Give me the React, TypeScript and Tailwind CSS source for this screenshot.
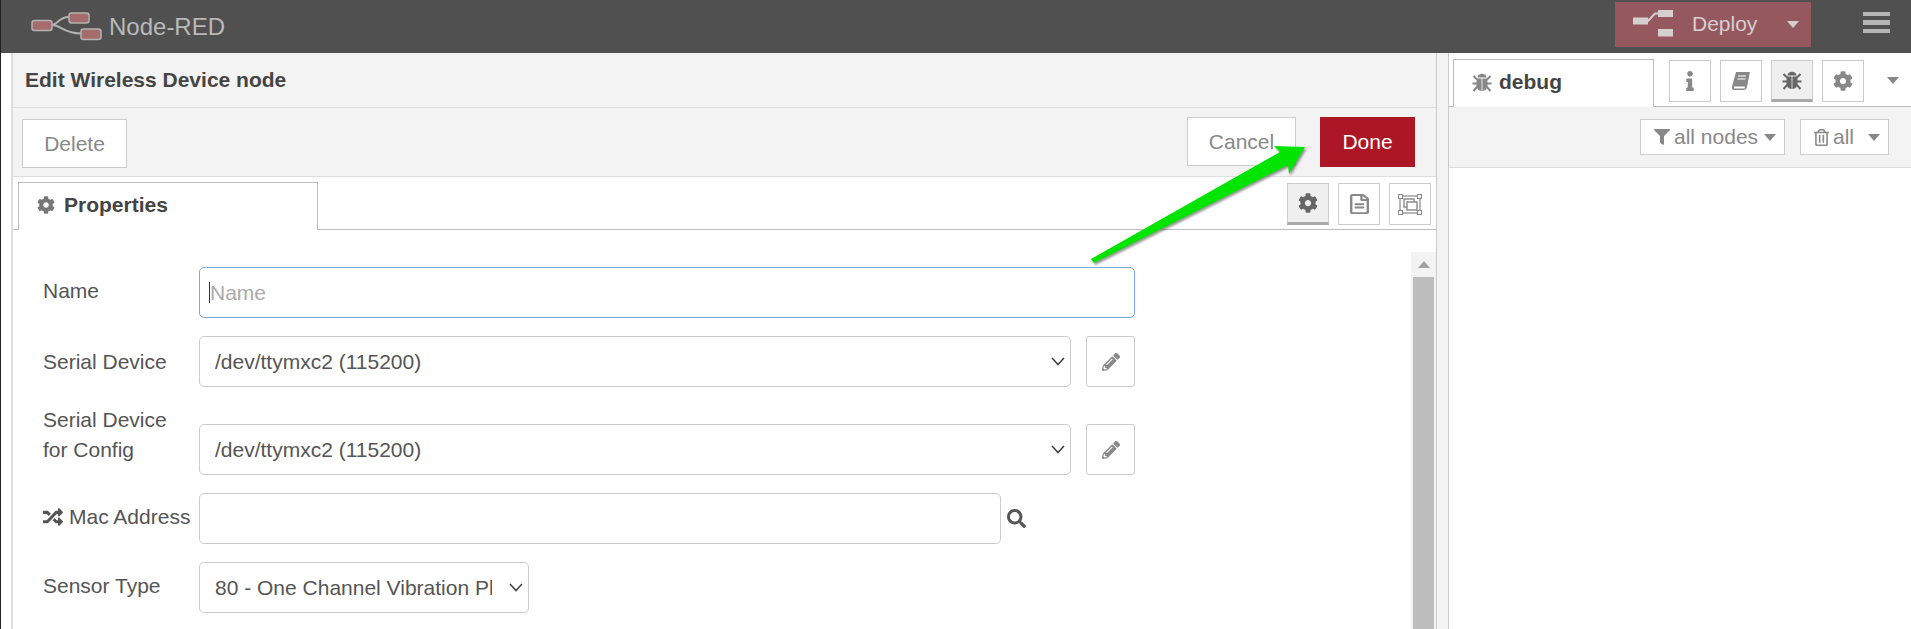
import { FaCog, FaFilter, FaInfo, FaPencilAlt, FaRandom, FaRegFileAlt, FaRegTrashAlt, FaSearch } from "react-icons/fa";

const font = "font-['Liberation_Sans',Arial,sans-serif]";

function Logo() {
  return (
    <svg width="72" height="29" viewBox="0 0 72 29" className="shrink-0">
      <path d="M21 13 C27 13 27 5 38 5" fill="none" stroke="#b3b3b3" strokeWidth="2" />
      <path d="M21 13 C30 13 32 21.500 50 21.500" fill="none" stroke="#b3b3b3" strokeWidth="2" />
      <rect x="1" y="8.500" width="20" height="10" rx="2.500" fill="#a66b6b" stroke="#b3b3b3" strokeWidth="1.500" />
      <rect x="38" y="1" width="20" height="10" rx="2.500" fill="#a66b6b" stroke="#b3b3b3" strokeWidth="1.500" />
      <rect x="50" y="17" width="20" height="10.500" rx="2.500" fill="#a66b6b" stroke="#b3b3b3" strokeWidth="1.500" />
    </svg>
  );
}

function DeployIcon() {
  return (
    <svg width="40" height="28" viewBox="0 0 40 28" className="shrink-0">
      <rect x="0" y="7.500" width="15" height="7" fill="#d6cfd0" />
      <rect x="25" y="0" width="15" height="7" fill="#d6cfd0" />
      <rect x="25" y="19" width="15" height="7.500" fill="#d6cfd0" />
      <path d="M14 12 L22 3.500 H26" fill="none" stroke="#d6cfd0" strokeWidth="2" />
    </svg>
  );
}

function BookIcon() {
  return (
    <svg width="20" height="20" viewBox="0 0 20 20">
      <path d="M5 1 H19 L16 15.500 C15.700 17.500 14.500 19 12.500 19 H3 C1.500 19 .5 17.500 1 15.500 Z" fill="#888" />
      <path d="M3 15.500 H14 L13.500 17.500 H3 Z" fill="#fff" />
      <path d="M7 5 H15 M6.500 8 H14.500" stroke="#fff" strokeWidth="1.200" />
    </svg>
  );
}

function BugIcon({ color, size }: { color: string; size: number }) {
  return (
    <svg width={size} height={size} viewBox="0 0 20 20">
      <path d="M5.500 5.500 C5.500 .5 14.500 .5 14.500 5.500 Z" fill={color} />
      <path d="M4.500 6.500 H9.600 V19 C6.500 19 4.500 16 4.500 13 Z" fill={color} />
      <path d="M15.500 6.500 H10.400 V19 C13.500 19 15.500 16 15.500 13 Z" fill={color} />
      <path d="M1.500 4 L5 7.500 M18.500 4 L15 7.500 M.5 11.500 H5 M19.500 11.500 H15 M1.500 19 L5.500 14.500 M18.500 19 L14.500 14.500" stroke={color} strokeWidth="2" fill="none" />
    </svg>
  );
}

function FrameIcon() {
  return (
    <svg width="24" height="21" viewBox="0 0 24 21">
      <rect x="2" y="2" width="20" height="17" fill="none" stroke="#888" strokeWidth="1.200" />
      <rect x="6" y="5" width="10" height="8" fill="none" stroke="#888" strokeWidth="1.400" />
      <rect x="9" y="8" width="10" height="8" fill="#fff" stroke="#888" strokeWidth="1.400" />
      <rect x=".5" y=".5" width="4" height="4" fill="#fff" stroke="#888" />
      <rect x="19.500" y=".5" width="4" height="4" fill="#fff" stroke="#888" />
      <rect x=".5" y="16.500" width="4" height="4" fill="#fff" stroke="#888" />
      <rect x="19.500" y="16.500" width="4" height="4" fill="#fff" stroke="#888" />
    </svg>
  );
}

function Arrow() {
  return (
    <svg width="240" height="140" viewBox="0 0 240 140" className="absolute left-[1080px] top-[135px] pointer-events-none">
      <defs>
        <filter id="arrowShadow" x="-10%" y="-10%" width="120%" height="120%">
          <feGaussianBlur stdDeviation="1" />
        </filter>
      </defs>
      <polygon points="10,124 199,17 193,11 224,12 208,39 207,30 13,128" fill="#333333" opacity="0.5" filter="url(#arrowShadow)" transform="translate(1.500,2)" />
      <polygon points="10,124 199,17 193,11 224,12 208,39 207,30 13,128" fill="#00e400" />
    </svg>
  );
}

function Caret({ className }: { className: string }) {
  return <div className={`h-0 w-0 shrink-0 border-x-[6px] border-t-[7px] border-x-transparent ${className}`} />;
}

function Chevron() {
  return (
    <svg width="14" height="9" viewBox="0 0 14 9" className="pointer-events-none absolute right-[6px] top-[21px]">
      <path d="M1 1 L7 7.500 L13 1" fill="none" stroke="#444444" strokeWidth="1.600" />
    </svg>
  );
}

function IconButton({ children, active }: { children: React.ReactNode; active?: boolean }) {
  return (
    <div className={`flex h-[42px] w-[42px] items-center justify-center border border-[#cccccc] ${active ? "border-b-[3px] border-b-[#aaaaaa] bg-[#efefef]" : "bg-white"}`}>
      {children}
    </div>
  );
}

function Select({ value, width }: { value: string; width: string }) {
  return (
    <div className={`relative shrink-0 ${width}`}>
      <select defaultValue={value} className="block h-[51px] w-full appearance-none rounded-[5px] border border-[#cccccc] bg-white pl-[15px] pr-[36px] text-[#555555] outline-none">
        <option>{value}</option>
      </select>
      <Chevron />
    </div>
  );
}

function EditButton() {
  return (
    <div className="ml-[15px] flex h-[51px] w-[49px] shrink-0 items-center justify-center rounded-[3px] border border-[#cccccc] bg-white">
      <FaPencilAlt className="h-[18px] w-[18px] text-[#888888]" />
    </div>
  );
}

export default function App() {
  return (
    <div className={`${font} relative flex h-screen w-full flex-col overflow-hidden border-l border-l-[#222222] bg-white text-[21px] text-[#555555]`}>
      {/* header */}
      <header className="flex h-[53px] shrink-0 items-center bg-[#505050]">
        <div className="ml-[30px]"><Logo /></div>
        <span className="ml-[6px] text-[24px] text-[#b9b9b9]">Node-RED</span>
        <div className="mb-[5px] ml-auto flex h-[45px] w-[196px] items-center bg-[#95585e] pl-[18px] text-[#d6cfd0]">
          <DeployIcon />
          <span className="ml-[19px]">Deploy</span>
          <Caret className="ml-[30px] border-t-[#d6cfd0]" />
        </div>
        <div className="mb-[9px] ml-[52px] mr-[21px] flex w-[27px] flex-col gap-[4px]">
          <div className="h-[4px] bg-[#b5b5b5]" />
          <div className="h-[5px] bg-[#b5b5b5]" />
          <div className="h-[4px] bg-[#b5b5b5]" />
        </div>
      </header>

      <div className="flex min-h-0 flex-1">
        <div className="w-[10px] shrink-0 bg-white" />
        {/* edit tray */}
        <main className="flex w-[1425px] shrink-0 flex-col border-l-2 border-l-[#dddddd]">
          <div className="flex h-[55px] shrink-0 items-center border-b border-b-[#dddddd] bg-[#f3f3f3] pl-[12px] font-bold text-[#444444]">
            Edit Wireless Device node
          </div>
          <div className="flex h-[69px] shrink-0 items-start border-b border-b-[#dddddd] bg-[#f3f3f3] pl-[9px]">
            <div className="mt-[11px] flex h-[49px] w-[105px] items-center justify-center border border-[#cccccc] bg-white text-[#888888]">Delete</div>
            <div className="ml-auto mt-[9px] flex h-[49px] w-[109px] items-center justify-center border border-[#cccccc] bg-white text-[#888888]">Cancel</div>
            <div className="ml-[24px] mr-[21px] mt-[9px] flex h-[50px] w-[95px] items-center justify-center bg-[#ad1625] text-white">Done</div>
          </div>

          <div className="flex h-[53px] shrink-0 items-end border-b border-b-[#bbbbbb]">
            <div className="-mb-px ml-[5px] flex h-[48px] w-[300px] items-center border border-b-0 border-[#bbbbbb] bg-white pb-[4px] pl-[18px] font-bold text-[#444444]">
              <FaCog className="mr-[9px] h-[18px] w-[18px] text-[#777777]" />
              Properties
            </div>
            <div className="mb-[4px] ml-auto mr-[5px] flex gap-[9px]">
              <IconButton active><FaCog className="h-[20px] w-[20px] text-[#666666]" /></IconButton>
              <IconButton><FaRegFileAlt preserveAspectRatio="none" className="h-[20px] w-[19px] text-[#888888]" /></IconButton>
              <IconButton><FrameIcon /></IconButton>
            </div>
          </div>

          <div className="flex min-h-0 flex-1">
            <form className="min-w-0 flex-1 pl-[30px] pt-[37px]">
              <div className="flex items-center">
                <div className="-mt-[3px] w-[156px] shrink-0">Name</div>
                <div className="relative">
                  <input placeholder="Name" className="block h-[51px] w-[936px] rounded-[5px] border border-[#7fa9de] pl-[10px] outline-none placeholder:text-[#aaaaaa]" />
                  <span className="absolute left-[10px] top-[15px] h-[21px] w-px bg-[#333333]" />
                </div>
              </div>
              <div className="mt-[18px] flex items-center">
                <div className="w-[156px] shrink-0">Serial Device</div>
                <Select width="w-[872px]" value="/dev/ttymxc2 (115200)" />
                <EditButton />
              </div>
              <div className="mt-[18px] flex items-start">
                <div className="w-[156px] shrink-0 leading-[30px]">Serial Device<br />for Config</div>
                <div className="mt-[19px] flex">
                  <Select width="w-[872px]" value="/dev/ttymxc2 (115200)" />
                  <EditButton />
                </div>
              </div>
              <div className="mt-[18px] flex items-center">
                <div className="-mt-[3px] flex w-[156px] shrink-0 items-center">
                  <FaRandom className="mr-[6px] h-[20px] w-[20px] text-[#555555]" />
                  <span className="whitespace-nowrap">Mac Address</span>
                </div>
                <input className="block h-[51px] w-[802px] rounded-[5px] border border-[#cccccc] outline-none" />
                <FaSearch className="ml-[6px] h-[19px] w-[19px] text-[#555555]" />
              </div>
              <div className="mt-[18px] flex items-center">
                <div className="-mt-[3px] w-[156px] shrink-0">Sensor Type</div>
                <Select width="w-[330px]" value="80 - One Channel Vibration Plus" />
              </div>
            </form>
            <div className="mt-[22px] flex w-[25px] shrink-0 flex-col items-center bg-[#f3f3f3]">
              <div className="flex h-[25px] w-full items-center justify-center">
                <div className="h-0 w-0 border-x-[6px] border-b-[7px] border-x-transparent border-b-[#a3a3a3]" />
              </div>
              <div className="w-[21px] flex-1 bg-[#bdbdbd]" />
            </div>
          </div>
        </main>

        {/* separator */}
        <div className="w-[13px] shrink-0 border-x border-x-[#cccccc] bg-[#f3f3f3]" />

        {/* sidebar */}
        <aside className="flex min-w-0 flex-1 flex-col">
          <div className="flex h-[54px] shrink-0 items-end border-b border-b-[#bbbbbb]">
            <div className="-mb-px ml-[4px] flex h-[48px] w-[201px] items-center border border-b-0 border-[#bbbbbb] bg-white pb-[4px] pl-[18px] font-bold text-[#444444]">
              <span className="mr-[7px]"><BugIcon color="#888888" size={20} /></span>
              debug
            </div>
            <div className="mb-[4px] ml-[15px] flex gap-[9px]">
              <IconButton><FaInfo className="h-[20px] w-[20px] text-[#888888]" /></IconButton>
              <IconButton><BookIcon /></IconButton>
              <IconButton active><BugIcon color="#666666" size={20} /></IconButton>
              <IconButton><FaCog className="h-[20px] w-[20px] text-[#888888]" /></IconButton>
            </div>
            <Caret className="mb-[22px] ml-[23px] border-t-[#888888]" />
          </div>
          <div className="flex h-[61px] shrink-0 items-center justify-end gap-[15px] border-b border-b-[#dddddd] bg-[#f3f3f3] pr-[22px] text-[#888888]">
            <div className="flex h-[36px] w-[145px] items-center border border-[#cccccc] bg-white pl-[13px]">
              <FaFilter className="mr-[4px] h-[16px] w-[16px]" />
              all nodes
              <Caret className="ml-auto mr-[8px] border-t-[#888888]" />
            </div>
            <div className="flex h-[36px] w-[89px] items-center border border-[#cccccc] bg-white pl-[12px]">
              <FaRegTrashAlt className="mr-[3px] h-[17px] w-[17px]" />
              all
              <Caret className="ml-auto mr-[8px] border-t-[#888888]" />
            </div>
          </div>
        </aside>
      </div>
      <Arrow />
    </div>
  );
}
